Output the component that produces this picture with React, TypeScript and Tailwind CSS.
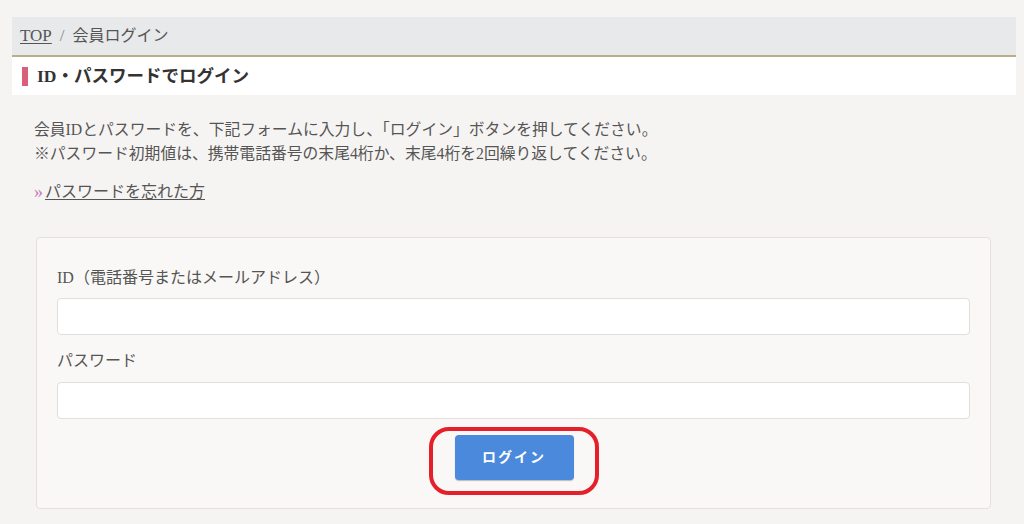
const font = { fontFamily: '"Liberation Serif", "Noto Sans CJK JP", serif' };

export default function App() {
  return (
    <div className="min-h-[524px] bg-[#f6f4f2] pt-[17px] pl-3 pr-2 text-[#444]" style={font}>
      {/* breadcrumb */}
      <nav className="flex h-[40px] items-center gap-[8px] border-b-2 border-[#b9ae8c] bg-[#e8e9ea] px-2 text-[17px] text-[#555]">
        <a href="#" className="underline underline-offset-2">TOP</a>
        <span className="text-[#888]">/</span>
        <span className="text-[16px]">会員ログイン</span>
      </nav>

      <h1 className="flex h-[38px] items-center gap-[9px] bg-white pl-[10px] text-[17.5px] font-bold text-[#333]">
        <span className="h-[19px] w-[6px] bg-[#d9607a]" />
        ID・パスワードでログイン
      </h1>

      <main className="px-[22px] pt-[23px]">
        <p className="text-[15.8px] leading-[24px] text-[#555]">
          会員IDとパスワードを、下記フォームに入力し、「ログイン」ボタンを押してください。
          <br />
          ※パスワード初期値は、携帯電話番号の末尾4桁か、末尾4桁を2回繰り返してください。
        </p>

        <a href="#" className="mt-[14px] inline-flex items-center gap-[2px] text-[16px] leading-[24px] text-[#555]">
          <span className="text-[18px] text-[#c77ab8]">»</span>
          <span className="underline underline-offset-2">パスワードを忘れた方</span>
        </a>

        <form className="mt-[32px] ml-[2px] mr-[3px] rounded border border-[#e6e0dc] bg-[#f9f8f6] px-[20px] pt-[28px] pb-[13px]">
          <label className="block text-[16px] leading-[24px] text-[#555]">ID（電話番号またはメールアドレス）</label>
          <input className="mt-[8px] block h-[37px] w-full rounded border border-[#e2dedb] bg-white" />
          <label className="mt-[14px] block text-[16px] leading-[24px] text-[#555]">パスワード</label>
          <input type="password" className="mt-[9px] block h-[37px] w-full rounded border border-[#e2dedb] bg-white" />
          <div className="mt-[8px] flex justify-center">
            <div className="rounded-[20px] border-4 border-[#e5202b] pt-[4px] pb-[11px] pl-[22px] pr-[21px]">
              <button type="button" className="block h-[45px] w-[119px] rounded-sm bg-[#4a89dc] text-[14px] font-bold tracking-[2px] text-white shadow-[0_1px_1px_rgba(0,0,0,0.25)]">
                ログイン
              </button>
            </div>
          </div>
        </form>
      </main>
    </div>
  );
}
